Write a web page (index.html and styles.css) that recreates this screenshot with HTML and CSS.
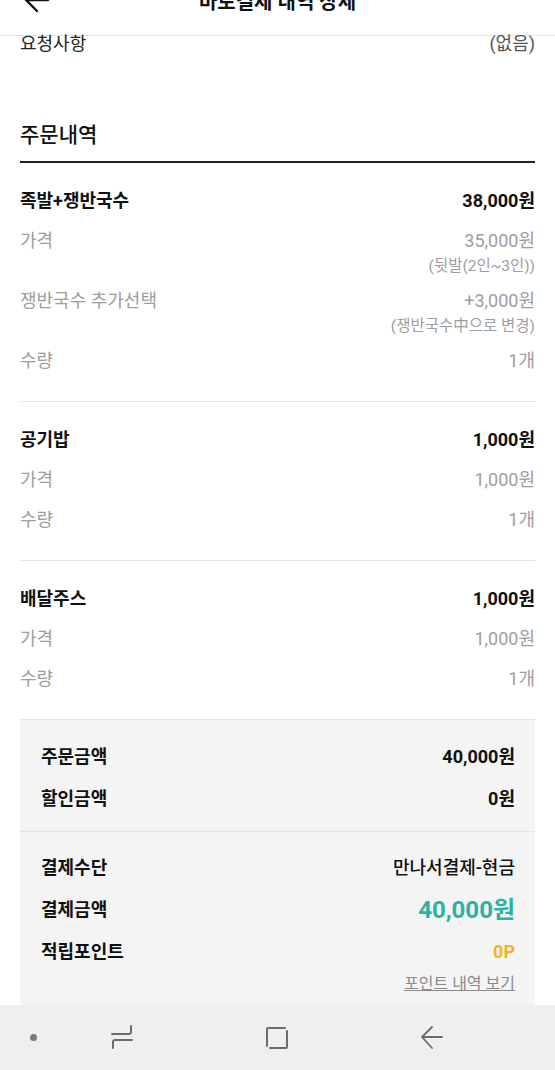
FILE: index.html
```html
<!DOCTYPE html>
<html lang="ko">
<head>
    <meta charset="UTF-8">
    <meta name="viewport" content="width=device-width, initial-scale=1.0">
    <title>바로결제 내역 상세</title>
    <link rel="stylesheet" href="styles.css">
</head>
<body>
    <header class="topbar">
        <div class="topbar-inner">
            <svg class="back-icon" width="26" height="26" viewBox="0 0 26 26">
                <path d="M24 13H3M13 2L2 13l11 11" fill="none" stroke="#111" stroke-width="2.4" stroke-linecap="round" stroke-linejoin="round"/>
            </svg>
            <h1>바로결제 내역 상세</h1>
        </div>
    </header>

    <main class="content">
        <div class="request">
            <span class="request-label">요청사항</span>
            <span class="request-value">(없음)</span>
        </div>

        <h2 class="section-title">주문내역</h2>

        <div class="order-group">
            <div class="row head">
                <span>족발+쟁반국수</span>
                <span>38,000원</span>
            </div>
            <div class="row sub">
                <span>가격</span>
                <div class="value">
                    <div>35,000원</div>
                    <div class="note">(뒷발(2인~3인))</div>
                </div>
            </div>
            <div class="row sub">
                <span>쟁반국수 추가선택</span>
                <div class="value">
                    <div>+3,000원</div>
                    <div class="note">(쟁반국수中으로 변경)</div>
                </div>
            </div>
            <div class="row sub">
                <span>수량</span>
                <span>1개</span>
            </div>
        </div>

        <div class="order-group">
            <div class="row head">
                <span>공기밥</span>
                <span>1,000원</span>
            </div>
            <div class="row sub">
                <span>가격</span>
                <span>1,000원</span>
            </div>
            <div class="row sub">
                <span>수량</span>
                <span>1개</span>
            </div>
        </div>

        <div class="order-group">
            <div class="row head">
                <span>배달주스</span>
                <span>1,000원</span>
            </div>
            <div class="row sub">
                <span>가격</span>
                <span>1,000원</span>
            </div>
            <div class="row sub">
                <span>수량</span>
                <span>1개</span>
            </div>
        </div>

        <div class="summary">
            <div class="summary-part">
                <div class="sum-row">
                    <span>주문금액</span>
                    <span>40,000원</span>
                </div>
                <div class="sum-row">
                    <span>할인금액</span>
                    <span>0원</span>
                </div>
            </div>
            <div class="summary-part">
                <div class="sum-row">
                    <span>결제수단</span>
                    <span class="pay-method">만나서결제-현금</span>
                </div>
                <div class="sum-row">
                    <span>결제금액</span>
                    <span class="pay-total">40,000원</span>
                </div>
                <div class="sum-row">
                    <span>적립포인트</span>
                    <span class="points">0P</span>
                </div>
                <div class="point-link"><a href="#">포인트 내역 보기</a></div>
            </div>
        </div>
    </main>

    <nav class="navbar">
        <span class="nav-dot"></span>
        <svg class="nav-icon" width="24" height="26" viewBox="0 0 24 26">
            <path d="M2 9H19Q21 9 21 7V1M22 15H5Q3 15 3 17V23" fill="none" stroke="#6b6b6b" stroke-width="2" stroke-linecap="round"/>
        </svg>
        <svg class="nav-icon" width="24" height="24" viewBox="0 0 24 24">
            <path d="M2 20V3Q2 2 3 2H20M22 5V21Q22 22 21 22H5" fill="none" stroke="#6b6b6b" stroke-width="2" stroke-linecap="round"/>
        </svg>
        <svg class="nav-icon" width="24" height="26" viewBox="0 0 24 26">
            <path d="M22 12H2M12 2L2 12l10 11" fill="none" stroke="#6b6b6b" stroke-width="1.8" stroke-linecap="round" stroke-linejoin="round"/>
        </svg>
    </nav>
</body>
</html>
```

FILE: styles.css
```css
html, body {
    margin: 0;
    padding: 0;
}
body {
    font-family: Roboto, "Noto Sans CJK KR", sans-serif;
    background-color: #fff;
    color: #111;
    height: 1070px;
    display: flex;
    flex-direction: column;
    overflow: hidden;
}
.topbar {
    flex: none;
    height: 35px;
    display: flex;
    align-items: flex-end;
    overflow: hidden;
    border-bottom: 1px solid #e2e2e2;
}
.topbar-inner {
    flex: none;
    width: 100%;
    height: 70px;
    display: flex;
    align-items: center;
    justify-content: center;
    position: relative;
}
.back-icon {
    position: absolute;
    left: 24px;
    top: 22px;
}
.topbar h1 {
    margin: 0;
    font-size: 20px;
    font-weight: 700;
    color: #111;
}
.content {
    flex: 1;
    min-height: 0;
    padding: 0 20px;
}
.request {
    display: flex;
    justify-content: space-between;
    line-height: 16px;
    font-size: 18px;
}
.request-label {
    color: #222;
}
.request-value {
    color: #555;
}
.section-title {
    margin: 71px 0 0;
    padding-bottom: 14px;
    font-size: 21px;
    font-weight: 500;
    line-height: 24px;
    border-bottom: 2px solid #222;
}
.order-group {
    padding: 18px 0 20px;
    border-bottom: 1px solid #e4e4e4;
}
.order-group:last-of-type {
    border-bottom: none;
}
.row {
    display: flex;
    justify-content: space-between;
    align-items: flex-start;
    padding: 8px 0;
    font-size: 18px;
    line-height: 24px;
}
.row.head {
    font-weight: 700;
    color: #111;
}
.row.sub {
    color: #9e9e9e;
}
.value {
    text-align: right;
    margin-bottom: -2px;
}
.note {
    margin-top: 4px;
    font-size: 15.5px;
    line-height: 18px;
}
.summary {
    background-color: #f4f4f4;
}
.summary-part {
    padding: 16px 20px 11px 21px;
}
.summary-part + .summary-part {
    padding-top: 15px;
    border-top: 1px solid #e4e4e4;
}
.sum-row {
    display: flex;
    justify-content: space-between;
    align-items: center;
    padding: 9px 0;
    font-size: 18px;
    font-weight: 700;
    line-height: 24px;
    color: #111;
}
.sum-row .pay-method {
    font-weight: 500;
}
.sum-row .pay-total {
    font-size: 24px;
    font-weight: 700;
    color: #2bb3a2;
}
.sum-row .points {
    color: #f0b429;
}
.point-link {
    text-align: right;
    line-height: 20px;
    margin-top: 1px;
    padding-bottom: 20px;
}
.point-link a {
    font-size: 16px;
    color: #8a8a8a;
    text-decoration: underline;
}
.navbar {
    flex: none;
    height: 65px;
    background-color: #efefef;
    display: flex;
    align-items: center;
    padding-left: 30px;
}
.nav-dot {
    width: 7px;
    height: 7px;
    border-radius: 50%;
    background-color: #7a7a7a;
    margin-right: 73px;
}
.nav-icon {
    flex: none;
}
.nav-icon + .nav-icon {
    margin-left: 131px;
}
```
